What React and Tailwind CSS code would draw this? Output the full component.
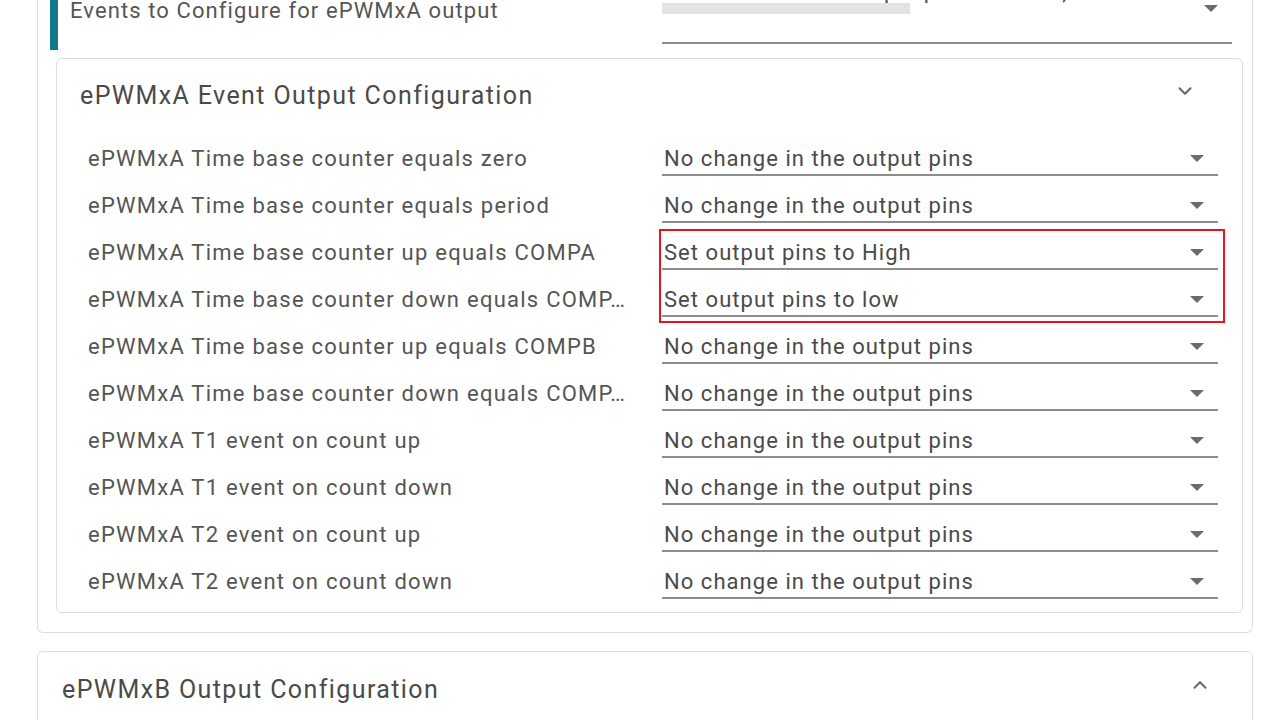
import { ChevronDown, ChevronUp } from "lucide-react";

const rows = [
  ["ePWMxA Time base counter equals zero", "No change in the output pins"],
  ["ePWMxA Time base counter equals period", "No change in the output pins"],
  ["ePWMxA Time base counter up equals COMPA", "Set output pins to High"],
  ["ePWMxA Time base counter down equals COMP…", "Set output pins to low"],
  ["ePWMxA Time base counter up equals COMPB", "No change in the output pins"],
  ["ePWMxA Time base counter down equals COMP…", "No change in the output pins"],
  ["ePWMxA T1 event on count up", "No change in the output pins"],
  ["ePWMxA T1 event on count down", "No change in the output pins"],
  ["ePWMxA T2 event on count up", "No change in the output pins"],
  ["ePWMxA T2 event on count down", "No change in the output pins"],
];

function Caret() {
  return (
    <svg width="14" height="8" viewBox="0 0 14 8" className="shrink-0">
      <path d="M0 0 L14 0 L7 7 Z" fill="#6b6b6b" />
    </svg>
  );
}

function Select({ value }) {
  return (
    <div className="flex h-[33px] w-[556px] items-center justify-between border-b-2 border-[#8d8d8d] pl-[2px] pr-[14px] pt-[1px]">
      <span className="text-[22px] leading-none tracking-[1.05px] text-[#4a4a4a]">{value}</span>
      <Caret />
    </div>
  );
}

export default function App() {
  return (
    <div
      className="h-[720px] w-[1280px] overflow-hidden bg-white"
      style={{ fontFamily: "Roboto, 'Noto Sans', sans-serif" }}
    >
      <div className="ml-[37px] mr-[27px] -mt-[30px] rounded-b-md border border-t-0 border-[#dedede] pb-[19px]">
        {/* top field, cut off by the window */}
        <div className="ml-[12px] flex h-[80px] border-l-8 border-[#127a88]">
          <div className="flex w-[604px] items-end pb-[28px] pl-[12px]">
            <span className="whitespace-nowrap text-[22px] leading-none tracking-[1.1px] text-[#555]">
              Events to Configure for ePWMxA output
            </span>
          </div>
          <div className="mb-[6px] flex w-[570px] flex-col border-b-2 border-[#8d8d8d]">
            <div className="mt-[11px] h-[22px] overflow-hidden whitespace-nowrap pl-[2px] text-[22px] leading-none tracking-[1.05px] text-[#4a4a4a]">
              Time base counter up equals COMPA, Time base counter down equals COMPA
            </div>
            <div className="flex h-[11px] items-center justify-between pr-[14px]">
              <div className="h-[11px] w-[248px] bg-[#e3e3e3]" />
              <Caret />
            </div>
          </div>
        </div>

        <div className="ml-[18px] mr-[9px] mt-[8px] rounded-md border border-[#dcdcdc] pb-[7px]">
          <div className="flex h-[76px] items-center justify-between pl-[23px] pr-[46px]">
            <span className="-mt-[4px] text-[25px] leading-none tracking-[1.4px] text-[#4a4a4a]">
              ePWMxA Event Output Configuration
            </span>
            <ChevronDown size={22} strokeWidth={2.2} color="#666" className="-mt-[12px]" />
          </div>

          <div className="relative pl-[31px]">
            {rows.map(([label, value], i) => (
              <div key={i} className="flex h-[47px] items-center gap-[28px]">
                <span className="w-[546px] overflow-hidden whitespace-nowrap text-[22px] leading-[30px] tracking-[1.25px] text-[#555]">
                  {label}
                </span>
                <div className="pt-[2px]">
                  <Select value={value} />
                </div>
              </div>
            ))}
            {/* annotation box over the two changed values */}
            <div className="pointer-events-none absolute left-[602px] top-[94px] h-[94px] w-[566px] border-2 border-[#e8141c]" />
          </div>
        </div>
      </div>

      <div className="ml-[37px] mr-[27px] mt-[18px] flex h-[80px] items-start justify-between rounded-md border border-[#dedede] pl-[24px] pr-[41px]">
        <span className="mt-[25px] text-[25px] leading-none tracking-[1.4px] text-[#4a4a4a]">
          ePWMxB Output Configuration
        </span>
        <ChevronUp size={22} strokeWidth={2.2} color="#666" className="mt-[22px]" />
      </div>
    </div>
  );
}
